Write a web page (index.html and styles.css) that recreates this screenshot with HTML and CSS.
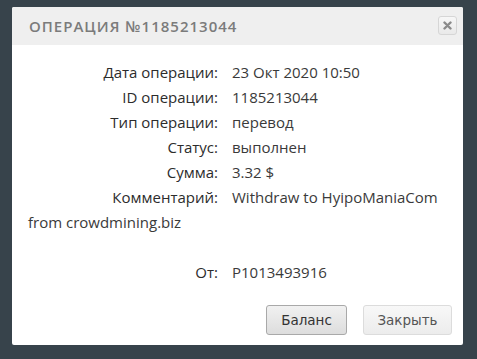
FILE: index.html
```html
<!DOCTYPE html>
<html lang="ru">
<head>
<meta charset="utf-8">
<link rel="stylesheet" href="styles.css">
</head>
<body>
<div class="dialog">
  <div class="dialog-head">
    <span class="dialog-title">Операция №1185213044</span>
    <button class="close-btn" type="button" aria-label="Закрыть">
      <svg width="9" height="9" viewBox="0 0 9 9"><path d="M1.5 1.5 L7.5 7.5 M7.5 1.5 L1.5 7.5" stroke="#8a8a8a" stroke-width="2.4" stroke-linecap="round"/></svg>
    </button>
  </div>
  <div class="dialog-body">
    <div class="row"><span class="label">Дата операции:</span><span class="value">23 Окт 2020 10:50</span></div>
    <div class="row"><span class="label">ID операции:</span><span class="value">1185213044</span></div>
    <div class="row"><span class="label">Тип операции:</span><span class="value">перевод</span></div>
    <div class="row"><span class="label">Статус:</span><span class="value">выполнен</span></div>
    <div class="row"><span class="label">Сумма:</span><span class="value">3.32 $</span></div>
    <div class="row"><span class="label">Комментарий:</span><span class="value">Withdraw to HyipoManiaCom</span> <span class="value">from crowdmining.biz</span></div>
    <div class="row empty"></div>
    <div class="row"><span class="label">От:</span><span class="value">P1013493916</span></div>
  </div>
  <div class="dialog-foot">
    <button class="btn btn-primary" type="button">Баланс</button>
    <button class="btn btn-close" type="button">Закрыть</button>
  </div>
</div>
</body>
</html>
```
FILE: styles.css
```css
html, body {
  margin: 0;
  padding: 0;
}
body {
  background: #37434b;
  width: 477px;
  height: 359px;
  overflow: hidden;
  padding: 7px 0 0 12px;
  box-sizing: border-box;
}
.dialog {
  width: 451px;
  height: 338px;
  background: #ffffff;
  display: flex;
  flex-direction: column;
  border-radius: 2px;
}
.dialog-head {
  height: 38px;
  background: #efefef;
  display: flex;
  align-items: center;
  justify-content: space-between;
  padding: 0 6px 0 17px;
  border-radius: 2px 2px 0 0;
}
.dialog-title {
  font-family: "Open Sans", sans-serif;
  font-size: 15px;
  font-weight: 600;
  text-transform: uppercase;
  letter-spacing: 1px;
  color: #7b7b7b;
  margin-top: -1px;
}
.close-btn {
  width: 19px;
  height: 19px;
  padding: 0;
  margin-top: -1px;
  border: 1px solid #d6d6d6;
  border-radius: 3px;
  background: linear-gradient(#f7f7f7, #e9e9e9);
  display: flex;
  align-items: center;
  justify-content: center;
}
.dialog-body {
  padding: 15px 16px 0 16px;
  font-family: "Open Sans", sans-serif;
  font-size: 15px;
  line-height: 25px;
  color: #3a3a3a;
}
.row {
  min-height: 25px;
}
.label {
  display: inline-block;
  width: 190px;
  text-align: right;
  margin-right: 14px;
  color: #2c2c2c;
}
.dialog-foot {
  margin-top: auto;
  padding: 0 11px 10px 0;
  display: flex;
  justify-content: flex-end;
  gap: 16px;
}
.btn {
  height: 30px;
  padding: 0;
  font-family: "DejaVu Sans", Verdana, sans-serif;
  font-size: 13.5px;
  color: #555;
  border: 1px solid #dcdcdc;
  border-radius: 3px;
  background: linear-gradient(#f8f8f8, #ececec);
}
.btn-primary {
  color: #333;
  border-color: #a9a9a9;
  background: linear-gradient(#f1f1f1, #dddddd);
  width: 81px;
}
.btn-close {
  width: 89px;
}
```
